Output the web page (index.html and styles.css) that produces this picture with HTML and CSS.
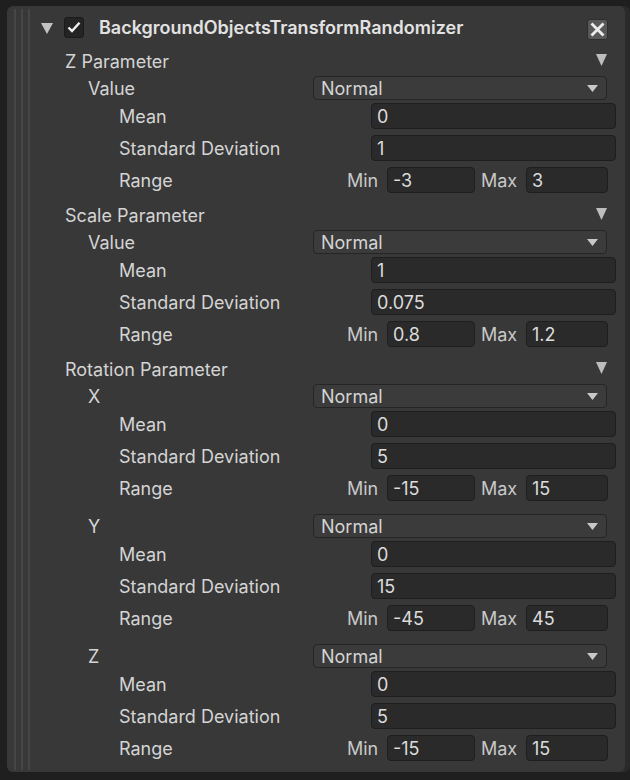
FILE: index.html
```html
<!DOCTYPE html>
<html>
<head>
<meta charset="utf-8">
<link rel="stylesheet" href="styles.css">
</head>
<body>
<div class="panel">
  <div class="gutter"><span class="gl"></span><span class="gl"></span><span class="gl"></span></div>
  <div class="content">
    <div class="header">
      <svg class="fold" width="12" height="12" viewBox="0 0 12 12"><path d="M0 1 L12 1 L6 12 Z" fill="#c2c2c2"/></svg>
      <div class="check"><svg width="14" height="12" viewBox="0 0 14 12"><path d="M1.5 6.5 L5 10 L12.5 1.8" fill="none" stroke="#f0f0f0" stroke-width="2.4"/></svg></div>
      <div class="title">BackgroundObjectsTransformRandomizer</div>
      <div class="close"><svg width="15" height="15" viewBox="0 0 15 15"><path d="M1.5 1.5 L13.5 13.5 M13.5 1.5 L1.5 13.5" stroke="#ececec" stroke-width="2.8"/></svg></div>
    </div>

    <div class="param">
      <div class="row ptitle"><span class="lbl">Z Parameter</span><svg class="ptri" width="11" height="12" viewBox="0 0 11 12"><path d="M0 0 L11 0 L5.5 12 Z" fill="#bdbdbd"/></svg></div>
      <div class="row dd"><span class="lbl">Value</span><div class="select"><span>Normal</span><svg width="11" height="7" viewBox="0 0 11 7"><path d="M0 0 L11 0 L5.5 7 Z" fill="#c8c8c8"/></svg></div></div>
      <div class="row fld first"><span class="lbl">Mean</span><div class="input wide">0</div></div>
      <div class="row fld"><span class="lbl">Standard Deviation</span><div class="input wide">1</div></div>
      <div class="row fld"><span class="lbl">Range</span><span class="mm min">Min</span><div class="input minf">-3</div><span class="mm max">Max</span><div class="input maxf">3</div></div>
    </div>

    <div class="param">
      <div class="row ptitle"><span class="lbl">Scale Parameter</span><svg class="ptri" width="11" height="12" viewBox="0 0 11 12"><path d="M0 0 L11 0 L5.5 12 Z" fill="#bdbdbd"/></svg></div>
      <div class="row dd"><span class="lbl">Value</span><div class="select"><span>Normal</span><svg width="11" height="7" viewBox="0 0 11 7"><path d="M0 0 L11 0 L5.5 7 Z" fill="#c8c8c8"/></svg></div></div>
      <div class="row fld first"><span class="lbl">Mean</span><div class="input wide">1</div></div>
      <div class="row fld"><span class="lbl">Standard Deviation</span><div class="input wide">0.075</div></div>
      <div class="row fld"><span class="lbl">Range</span><span class="mm min">Min</span><div class="input minf">0.8</div><span class="mm max">Max</span><div class="input maxf">1.2</div></div>
    </div>

    <div class="param">
      <div class="row ptitle"><span class="lbl">Rotation Parameter</span><svg class="ptri" width="11" height="12" viewBox="0 0 11 12"><path d="M0 0 L11 0 L5.5 12 Z" fill="#bdbdbd"/></svg></div>
      <div class="row dd"><span class="lbl">X</span><div class="select"><span>Normal</span><svg width="11" height="7" viewBox="0 0 11 7"><path d="M0 0 L11 0 L5.5 7 Z" fill="#c8c8c8"/></svg></div></div>
      <div class="row fld first"><span class="lbl">Mean</span><div class="input wide">0</div></div>
      <div class="row fld"><span class="lbl">Standard Deviation</span><div class="input wide">5</div></div>
      <div class="row fld"><span class="lbl">Range</span><span class="mm min">Min</span><div class="input minf">-15</div><span class="mm max">Max</span><div class="input maxf">15</div></div>

      <div class="row dd axis"><span class="lbl">Y</span><div class="select"><span>Normal</span><svg width="11" height="7" viewBox="0 0 11 7"><path d="M0 0 L11 0 L5.5 7 Z" fill="#c8c8c8"/></svg></div></div>
      <div class="row fld first"><span class="lbl">Mean</span><div class="input wide">0</div></div>
      <div class="row fld"><span class="lbl">Standard Deviation</span><div class="input wide">15</div></div>
      <div class="row fld"><span class="lbl">Range</span><span class="mm min">Min</span><div class="input minf">-45</div><span class="mm max">Max</span><div class="input maxf">45</div></div>

      <div class="row dd axis"><span class="lbl">Z</span><div class="select"><span>Normal</span><svg width="11" height="7" viewBox="0 0 11 7"><path d="M0 0 L11 0 L5.5 7 Z" fill="#c8c8c8"/></svg></div></div>
      <div class="row fld first"><span class="lbl">Mean</span><div class="input wide">0</div></div>
      <div class="row fld"><span class="lbl">Standard Deviation</span><div class="input wide">5</div></div>
      <div class="row fld"><span class="lbl">Range</span><span class="mm min">Min</span><div class="input minf">-15</div><span class="mm max">Max</span><div class="input maxf">15</div></div>
    </div>
  </div>
</div>
</body>
</html>
```
FILE: styles.css
```css
html, body {
  margin: 0;
  padding: 0;
  background: #1f1f1f;
  width: 630px;
  height: 780px;
  overflow: hidden;
}
body {
  font-family: Inter, "Noto Sans", sans-serif;
  font-size: 18px;
  color: #d4d4d4;
}
.panel {
  margin: 6px 5px 0 7px;
  height: 766px;
  background: #383838;
  border-radius: 6px;
  display: flex;
  box-shadow: 5px 0 0 #2a2a2a;
}
.gutter {
  width: 23px;
  flex: none;
  display: flex;
  padding: 3px 0 2px 7px;
  box-sizing: border-box;
  gap: 5px;
}
.gl {
  width: 2px;
  background: #464646;
}
.content {
  flex: 1;
  display: flex;
  flex-direction: column;
}
.header {
  height: 42px;
  display: flex;
  align-items: center;
}
.fold {
  margin-left: 11px;
  margin-top: 2px;
}
.check {
  margin-left: 11px;
  width: 20px;
  height: 21px;
  border-radius: 3px;
  background: #242424;
  border: 1px solid #1b1b1b;
  box-sizing: border-box;
  display: flex;
  align-items: center;
  justify-content: center;
}
.title {
  margin-left: 15px;
  font-weight: 600;
  color: #e2e2e2;
  flex: 1;
  padding-top: 1px;
}
.close {
  width: 21px;
  height: 21px;
  margin-right: 17px;
  margin-top: 5px;
  border-radius: 3px;
  background: #585858;
  border: 1px solid #2e2e2e;
  box-sizing: border-box;
  display: flex;
  align-items: center;
  justify-content: center;
}
.param {
  display: flex;
  flex-direction: column;
  margin-bottom: 9px;
}
.row {
  display: flex;
  align-items: center;
}
.lbl {
  flex: 1;
  white-space: nowrap;
  padding-top: 1px;
}
.ptitle {
  height: 26px;
  padding-left: 35px;
  padding-right: 18px;
}
.ptri {
  margin-top: -2px;
}
.dd {
  height: 24px;
  margin-top: 2px;
  padding-left: 58px;
  padding-right: 18px;
}
.dd.axis {
  margin-top: 13px;
}
.select {
  width: 294px;
  height: 24px;
  box-sizing: border-box;
  border: 1px solid #252525;
  border-radius: 4px;
  background: #3b3b3b;
  display: flex;
  align-items: center;
  justify-content: space-between;
  padding: 0 8px 0 7px;
  color: #d4d4d4;
}
.fld {
  height: 26px;
  margin-top: 6px;
  padding-left: 89px;
  padding-right: 9px;
}
.fld.first {
  margin-top: 3px;
}
.input {
  height: 26px;
  box-sizing: border-box;
  border: 1px solid #1e1e1e;
  border-radius: 4px;
  background: #2a2a2a;
  padding: 1px 0 0 5px;
  line-height: 24px;
  color: #dcdcdc;
}
.wide {
  width: 245px;
}
.mm {
  color: #c8c8c8;
  padding-top: 1px;
  white-space: nowrap;
  box-sizing: border-box;
}
.min {
  width: 40px;
}
.minf {
  width: 88px;
}
.max {
  width: 51px;
  padding-left: 6px;
}
.maxf {
  width: 82px;
  margin-right: 8px;
}
```
